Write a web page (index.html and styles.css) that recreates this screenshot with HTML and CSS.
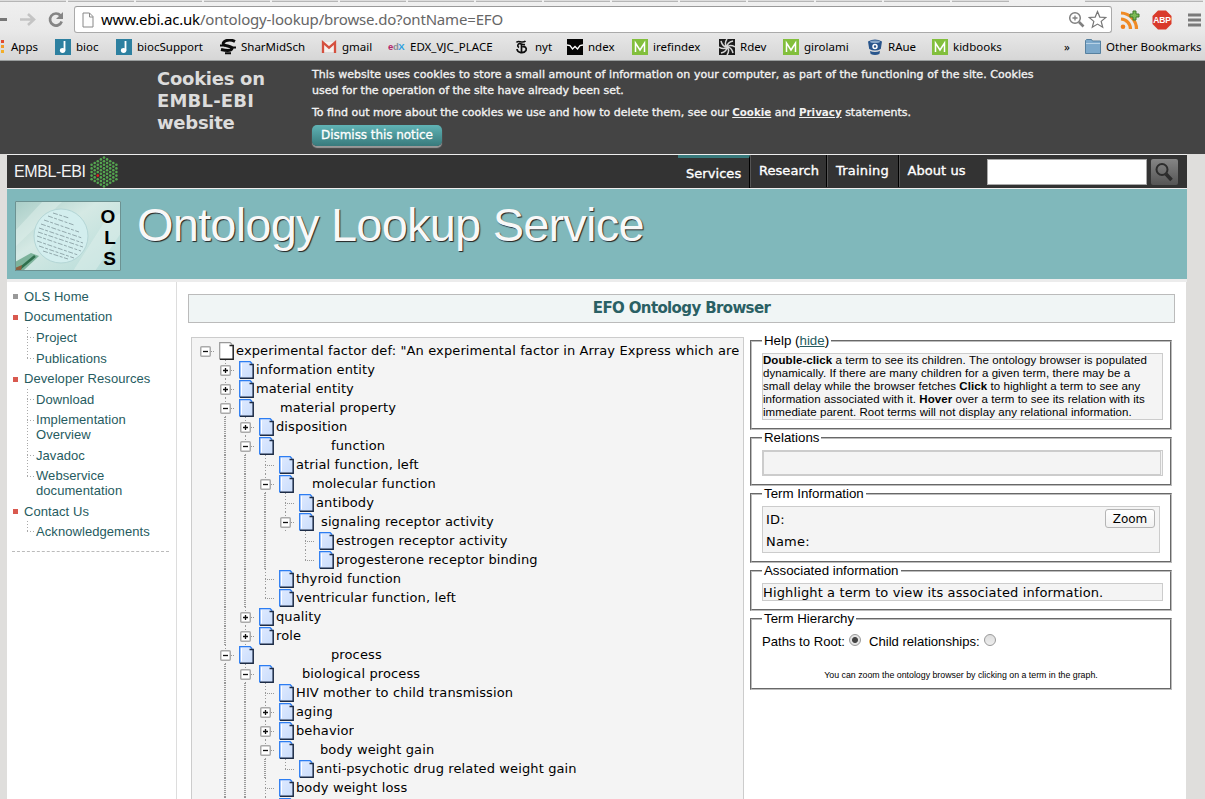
FILE: index.html
```html
<!DOCTYPE html>
<html lang="en">
<head>
<meta charset="utf-8">
<title>EFO Ontology Browser</title>
<link rel="stylesheet" href="styles.css">
</head>
<body>
<div class="chrome">
  <div class="tabs"><i></i><i></i><i></i><i></i><i></i><i></i><i></i><i></i><i></i><i></i><i></i><i></i><i></i><i></i><i class="short"></i><i class="active"></i><i class="rest"></i></div>
  <div class="toolbar">
    <svg class="navbtns" width="74" height="28" viewBox="0 0 74 28"><path d="M0 13.500h7" stroke="#777" stroke-width="3"/><path d="M20 13.500h13M28 8l6 5.500-6 5.500" stroke="#c4c4c4" stroke-width="2.600" fill="none"/><path d="M60.500 9.500a6 6 0 1 0 1.200 6" stroke="#858585" stroke-width="2.700" fill="none"/><path d="M63 6v7h-7z" fill="#858585"/></svg>
    <div class="omnibox">
      <svg width="12" height="16" viewBox="0 0 12 16"><path d="M1 1h6.500l3.500 3.500V15H1zM7.500 1v4H11" fill="#fdfdfd" stroke="#888"/></svg>
      <div class="url"><b>www.ebi.ac.uk</b>/ontology-lookup/browse.do?ontName=EFO</div>
      <svg class="mag" width="17" height="17" viewBox="0 0 17 17"><g fill="none" stroke="#808080"><circle cx="7" cy="7" r="5.300" stroke-width="1.500"/><path d="M7 4.500v5M4.500 7h5" stroke-width="1.300"/><path d="M11 11l4.500 4.500" stroke-width="2.600"/></g></svg>
      <svg class="star" width="19" height="19" viewBox="0 0 19 19"><path d="M9.500 1.500l2.300 5.600 6 .4-4.600 3.900 1.500 5.900-5.200-3.200-5.200 3.200 1.500-5.900L1.200 7.500l6-.4z" fill="#fff" stroke="#777" stroke-width="1.200"/></svg>
    </div>
    <svg class="rss" width="20" height="20" viewBox="0 0 20 20"><g fill="none" stroke="#f08a24" stroke-width="3.200"><path d="M1 3a16 16 0 0 1 15.500 16"/><path d="M1 9a10 10 0 0 1 9.500 10"/></g><circle cx="3" cy="16.800" r="2.300" fill="#ef7f1a"/><path d="M13 1h3v3h3v3h-3v3h-3V7h-3V4h3z" fill="#7dbb57" stroke="#3f7a2c"/></svg>
    <svg class="abp" width="20" height="20" viewBox="0 0 20 20"><path d="M6 .5h8L19.500 6v8L14 19.500H6L.5 14V6z" fill="#d93a2b"/><text x="10" y="13.300" text-anchor="middle" class="abptext">ABP</text></svg>
    <svg class="burger" width="14" height="14" viewBox="0 0 14 14"><path d="M0 2h13M0 7h13M0 12h13" stroke="#7a7a7a" stroke-width="3"/></svg>
  </div>
  <div class="bookmarks">
    <div class="bm apps"><svg width="4" height="16" viewBox="0 0 4 16"><path d="M1 1h3v3H1z" fill="#e2492f"/><path d="M1 6h3v3H1z" fill="#f09a28"/><path d="M1 11h3v3H1z" fill="#f3ae28"/></svg><span>Apps</span></div>
    <div class="bm"><svg width="16" height="16"><use href="#bioc"/></svg><span>bioc</span></div>
    <div class="bm"><svg width="16" height="16"><use href="#bioc"/></svg><span>biocSupport</span></div>
    <div class="bm"><svg width="16" height="16" viewBox="0 0 16 16"><path d="M15 2.500C8-1 2 3 3.500 5.300c1.500 2 9 1.700 8.500 4.200C11 12.500 5 11.500 1 10.500" fill="none" stroke="#0b0b0b" stroke-width="3"/><path d="M0 6.500h5M10 8.500h6M5 14.300h6" stroke="#0b0b0b" stroke-width="2"/></svg><span>SharMidSch</span></div>
    <div class="bm"><svg width="16" height="16" viewBox="0 0 16 16"><path d="M1.500 3h13v10h-13z" fill="#f4f0ee"/><path d="M2 14V3.500l6 5.200 6-5.200V14" fill="none" stroke="#d5503f" stroke-width="2.300"/></svg><span>gmail</span></div>
    <div class="bm"><svg width="17" height="16" viewBox="0 0 17 16"><text x="0" y="11" class="edx"><tspan fill="#b5256b">e</tspan><tspan fill="#8b8d96">d</tspan><tspan fill="#2ea1e0">X</tspan></text></svg><span>EDX_VJC_PLACE</span></div>
    <div class="bm"><svg width="16" height="16" viewBox="0 0 16 16"><g fill="none" stroke="#0c0c0c" stroke-width="1.700"><path d="M2.500 3.500c1-3 6 1.500 9-1.500M11 5.500C8 6 6 3.500 4.500 5s-.5 3 .5 3.500M3 10c.5 4 6.500 5 9 1.500C13 9 11 7 8.500 8M7.500 4.500V13"/></g></svg><span>nyt</span></div>
    <div class="bm"><svg width="16" height="16" viewBox="0 0 16 16"><path d="M0 0h16v16H0z" fill="#050505"/><path d="M0 6l3 .5 2.500 3.500L8 7.500l2.500 2.500L13 6.500l3-.5" fill="none" stroke="#fff" stroke-width="1.300"/></svg><span>ndex</span></div>
    <div class="bm"><svg width="16" height="16"><use href="#mm"/></svg><span>irefindex</span></div>
    <div class="bm"><svg width="16" height="16" viewBox="0 0 16 16"><path d="M0 0h16v16H0z" fill="#1c1c1c"/><g fill="none" stroke="#d8d8d8" stroke-width="1.500"><path d="M8 8C6 6 6 3 8 0M8 8c0-3 2-5 6-6M8 8c2-2 5-2 8 0M8 8c3 0 5 2 6 6M8 8c2 2 2 5 0 8M8 8c0 3-2 5-6 6M8 8c-2 2-5 2-8 0M8 8C5 8 3 6 2 2"/></g></svg><span>Rdev</span></div>
    <div class="bm"><svg width="16" height="16"><use href="#mm"/></svg><span>girolami</span></div>
    <div class="bm"><svg width="16" height="16" viewBox="0 0 16 16"><path d="M1 2.500Q8-1.500 15 2.500L13.800 10Q8 13 2.200 10zM3 12q5 2 10 0l-.6 3Q8 17 3.600 15z" fill="#28558c"/><ellipse cx="8" cy="2.800" rx="5" ry="1.200" fill="#86a6c8"/><circle cx="8" cy="7.500" r="2" fill="none" stroke="#fff" stroke-width="1.500"/></svg><span>RAue</span></div>
    <div class="bm"><svg width="16" height="16"><use href="#mm"/></svg><span>kidbooks</span></div>
    <div class="bm more">»</div>
    <div class="bm"><svg width="16" height="16" viewBox="0 0 16 16"><path d="M.5 14.500V1.500l1-1h5l1 1.500h8v12.500z" fill="#7da9cb" stroke="#56809f"/><path d="M1 4.500h14" stroke="#b7d2e6"/></svg><span>Other Bookmarks</span></div>
  </div>
</div>
<svg class="defs" width="0" height="0">
  <defs>
    <linearGradient id="blue" x1="0" y1="0" x2="1" y2="1"><stop offset="0" stop-color="#dfeaff"/><stop offset="1" stop-color="#c9dcfb"/></linearGradient>
  </defs>
  <symbol id="bioc" viewBox="0 0 16 16"><path d="M0 0h16v16H0z" fill="#2d80a0"/><path d="M9.500 2v9.500" stroke="#fff" stroke-width="1.800"/><ellipse cx="7.600" cy="11.500" rx="2.700" ry="2.400" fill="#fff"/></symbol>
  <symbol id="mm" viewBox="0 0 16 16"><path d="M0 0h16v16H0z" fill="#82bf3c"/><path d="M3.500 13V4l4.500 7 4.500-7v9" fill="none" stroke="#fff" stroke-width="1.500"/></symbol>
  <symbol id="page" viewBox="0 0 16 18"><path d="M1 .8h9.700L14.500 5v12H1z" fill="url(#blue)"/><path d="M2.500 2.300v13" stroke="#fff"/><path d="M.7 17.500V.7h10.500l2 2" fill="none" stroke="#2c7df2" stroke-width="1.300"/><path d="M10.500 3.500h3.700v13.700H1" fill="none" stroke="#1c2b45" stroke-width="1.500"/></symbol>
  <symbol id="root" viewBox="0 0 16 18"><path d="M1 .8h9.700L14.500 5v12H1z" fill="#fff"/><path d="M.7 17.500V.7h10.500l2 2" fill="none" stroke="#999" stroke-width="1.200"/><path d="M10.500 3.500h3.700v13.700H1" fill="none" stroke="#222" stroke-width="1.500"/></symbol>
</svg>
<div class="cookie">
  <h2>Cookies on<br><span class="wide">EMBL-EBI</span><br>website</h2>
  <div class="cookietext">
    <p><span class="l1">This website uses cookies to store a small amount of information on your computer, as part of the functioning of the site. Cookies</span><br><span>used for the operation of the site have already been set.</span></p>
    <p>To find out more about the cookies we use and how to delete them, see our <a>Cookie</a> and <a>Privacy</a> statements.</p>
    <button class="dismiss">Dismiss this notice</button>
  </div>
</div>
<div class="page">
  <div class="masthead">
    <div class="embl">EMBL-EBI</div>
    <svg class="hex" id="hex" width="28" height="32" viewBox="0 0 28 32"></svg>
    <div class="nav"><a class="on">Services</a><a>Research</a><a>Training</a><a>About us</a></div>
    <div class="search"></div>
    <div class="go"><svg width="26" height="26" viewBox="0 0 26 26"><circle cx="11" cy="10.500" r="5.500" fill="none" stroke="#2c2c2c" stroke-width="2"/><path d="M15 15l5.500 6" stroke="#2c2c2c" stroke-width="3.600"/></svg></div>
  </div>
  <div class="banner">
    <svg width="106" height="70" viewBox="0 0 106 70">
      <defs><linearGradient id="bg" x1="0" y1="0" x2="1" y2="1"><stop offset="0" stop-color="#a9cdc7"/><stop offset=".4" stop-color="#d5e9e4"/><stop offset="1" stop-color="#b3dbd8"/></linearGradient></defs>
      <path d="M0 0h106v70H0z" fill="url(#bg)"/>
      <path d="M0 30L28 0h20L0 46zM58 70L90 20l16-8v20L80 70z" fill="#e0f0eb" opacity=".5"/>
      <path d="M0 61l16-9 8 3L8 70H0z" fill="#7db39b"/><path d="M2 70l18-15" stroke="#2f6f4c" stroke-width="2.500"/><path d="M0 67l7-3-1 6H0z" fill="#8c6040"/>
      <circle cx="46" cy="35" r="27" fill="#d3eeee" stroke="#b4d6d6"/>
      <g stroke="#7d9297" stroke-dasharray="5 1.500 3 1.500" opacity=".75"><path d="M33 15l26 9M29 19l35 12M26 23l41 14M24 27l44 15M23 31l45 15M22 35l44 15M22 40l41 14M24 45l35 12M28 50l25 8M38 12l16 5"/></g>
      <path d="M.5.5h105v69H.5z" fill="none" stroke="#6c9292"/>
      <g class="olstext"><text x="93" y="22">O</text><text x="95" y="43">L</text><text x="94.500" y="64">S</text></g>
    </svg>
    <h1>Ontology Lookup Service</h1>
  </div>
  <div class="body">
    <div class="side">
      <ul>
        <li class="top grey">OLS Home</li>
        <li class="top h21">Documentation</li>
        <li class="sub">Project</li>
        <li class="sub last h20">Publications</li>
        <li class="top h21">Developer Resources</li>
        <li class="sub">Download</li>
        <li class="sub two">Implementation<br>Overview</li>
        <li class="sub">Javadoc</li>
        <li class="sub two last">Webservice<br>documentation</li>
        <li class="top">Contact Us</li>
        <li class="sub last">Acknowledgements</li>
      </ul>
    </div>
    <div class="main">
      <div class="title">EFO Ontology Browser</div>
      <div class="cols">
        <div class="tree" id="tree"></div>
        <div class="right">
          <fieldset class="f1"><legend>Help (<a>hide</a>)</legend>
            <div class="box help"><b>Double-click</b> a term to see its children. The ontology browser is populated<br>dynamically. If there are many children for a given term, there may be a<br>small delay while the browser fetches <b>Click</b> to highlight a term to see any<br>information associated with it. <b>Hover</b> over a term to see its relation with its<br>immediate parent. Root terms will not display any relational information.</div></fieldset>
          <fieldset class="f2"><legend>Relations</legend><div class="box rel"><div></div></div></fieldset>
          <fieldset class="f3"><legend>Term Information</legend><div class="box term"><div class="labels">ID:<br>Name:</div><button>Zoom</button></div></fieldset>
          <fieldset class="f4"><legend>Associated information</legend><div class="box assoc">Highlight a term to view its associated information.</div></fieldset>
          <fieldset class="f5"><legend>Term Hierarchy</legend>
            <div class="radios"><span>Paths to Root:</span><i class="radio sel"></i><span class="child">Child relationships:</span><i class="radio"></i></div>
            <div class="note">You can zoom the ontology browser by clicking on a term in the graph.</div></fieldset>
        </div>
      </div>
    </div>
  </div>
</div>
<script src="app.js"></script>
</body>
</html>
```
FILE: styles.css
```css
* { box-sizing: border-box; }
body { margin: 0; width: 1205px; height: 799px; overflow: hidden; background: #dfdedc; font-family: "Liberation Sans", Arial, sans-serif; color: #000; }
svg { display: block; flex: none; }
.defs { position: absolute; }
.chrome { height: 61px; overflow: hidden; background: linear-gradient(#f0f0f0, #e9e9e9 50%, #d6d6d6); border-bottom: 1px solid #9a9e9e; }
.tabs { height: 2px; display: flex; gap: 2px; overflow: hidden; }
.tabs i { flex: none; width: 66px; height: 2px; background: #ddd; border-bottom: 1px solid #b5b5b5; }
.tabs .short { width: 57px; }
.tabs .active { width: 72px; border: 0; background: none; }
.tabs .rest { width: 118px; }
.toolbar { display: flex; height: 31px; padding-top: 4px; }
.omnibox { width: 1038px; height: 27px; background: #fff; border: 1px solid #aaa; border-top-color: #999; border-radius: 3px; display: flex; align-items: center; padding-left: 7px; }
.url { width: 967px; margin: -2px 0 0 7px; font: 15px "Noto Sans", sans-serif; color: #666; white-space: nowrap; letter-spacing: -.18px; }
.url b { font-weight: 400; color: #000; }
.star { margin-left: 3px; }
.rss { margin: 4px 0 0 8px; }
.abp { margin: 4px 0 0 12px; }
.abptext { font: bold 8.5px "Liberation Sans", sans-serif; fill: #fff; letter-spacing: -.2px; }
.burger { margin: 7px 0 0 16px; }
.bookmarks { display: grid; height: 27px; align-items: center; grid-template-columns: 55px 61px 104px 101px 67px 126px 53px 65px 87px 64px 84px 65px 132px 21px 120px; }
.bm { display: flex; align-items: center; font: 11.5px "Noto Sans", sans-serif; gap: 5px; white-space: nowrap; letter-spacing: 0; }
.bm span { margin-top: -1px; }
.apps { gap: 7px; }
.edx { font: bold 9.5px "Liberation Sans", sans-serif; letter-spacing: -.4px; }
.cookie { height: 93px; background: #444; display: flex; color: #f2f2f2; font-family: "DejaVu Sans", sans-serif; }
.cookie h2 { margin: 7px 0 0 157px; width: 155px; font-size: 18px; line-height: 22px; color: #dcdcdc; letter-spacing: -.27px; }
.wide { letter-spacing: .2px; }
.cookietext { font-size: 11px; -webkit-text-stroke: .35px #f2f2f2; white-space: nowrap; }
.cookietext p { margin: 0; line-height: 16px; }
.cookietext p:first-child { margin-top: 6px; }
.cookietext p + p { margin-top: 5px; }
.l1 { letter-spacing: .045px; }
.cookie a { text-decoration: underline; font-weight: 700; -webkit-text-stroke: 0; font-size: 10.3px; }
.dismiss { display: block; width: 130px; height: 21px; margin-top: 4px; padding: 0 0 2px; border: 0; border-radius: 5px; color: #fff; font: 12px "DejaVu Sans", sans-serif; letter-spacing: -.05px; -webkit-text-stroke: .3px #fff; background: linear-gradient(#60b3b5, #387a7c); box-shadow: 0 2px 1px #999; }
.page { width: 1180px; margin: 0 0 0 7px; border-top: 1px solid #eee; }
.masthead { display: flex; height: 34px; background: #333; border-bottom: 1px solid #eee; }
.embl { margin-left: 7px; width: 76px; line-height: 34px; font-size: 16px; letter-spacing: -.4px; color: #f2f2f2; }
.hex { width: 28px; margin-top: 1px; }
.nav { display: flex; margin-left: 560px; width: 309px; font: 13px "DejaVu Sans", sans-serif; color: #fff; -webkit-text-stroke: .35px #fff; height: 32px; }
.nav a { padding: 0 8px; line-height: 31px; border-right: 1px solid #000; border-left: 1px solid #555; white-space: nowrap; width: 77px; letter-spacing: .05px; }
.nav a:nth-child(3) { width: 72px; letter-spacing: .2px; }
.nav a:last-child { border-right: 0; width: 89px; }
.nav .on { width: 72px; border-left: 0; border-top: 3px solid #387a7c; line-height: 31px; height: 33px; }
.search { width: 160px; height: 26px; margin-top: 4px; background: #fff; border: 1px solid #aaa; }
.go { width: 27px; height: 26px; margin: 4px 0 0 4px; border-radius: 2px; background: linear-gradient(#858585, #555); }
.banner { height: 93px; background: #80b8bb; border-bottom: 3px solid #ececec; display: flex; padding: 12px 0 0 8px; }
.banner h1 { margin: -4px 0 0 16px; font-size: 47px; line-height: 56px; font-weight: 400; color: #f8f8f8; text-shadow: 1px 1px 1px #222; letter-spacing: -.8px; }
.olstext { font: bold 19px "Liberation Sans", sans-serif; text-anchor: middle; }
.body { display: flex; height: 517px; width: 1179px; background: #fff; }
.side { width: 170px; border-right: 1px solid #ddd; padding: 4px 0 0 5px; }
.side ul { list-style: none; margin: 0; padding: 0 0 9px; width: 157px; border-bottom: 1px dashed #bbb; color: #265b60; font-size: 13px; line-height: 15px; letter-spacing: .07px; }
.side li { height: 20px; white-space: nowrap; }
.top { display: flex; align-items: center; gap: 6px; }
.side .h21 { height: 21px; }
.top::before { content: ""; width: 5px; height: 5px; background: #d9594f; margin: 1px 0 0 1px; }
.top.grey::before { background: #999; }
.side .sub { height: 21px; padding: 3px 0 0 24px; background: repeating-linear-gradient(#aaa 0 1px, transparent 1px 3px) 15px 0 / 1px 100% no-repeat, repeating-linear-gradient(90deg, #aaa 0 1px, transparent 1px 3px) 15px 10px / 8px 1px no-repeat; }
.side .last { background-size: 1px 11px, 8px 1px; }
.side .h20 { height: 20px; }
.side .two { height: 35px; padding-top: 2px; }
.main { padding: 12px 0 0 11px; width: 1009px; }
.title { width: 987px; height: 29px; border: 1px solid #bbb; background: #f0f5f5; text-align: center; font: bold 15px/26px "DejaVu Sans", sans-serif; color: #2a6064; letter-spacing: -.63px; }
.cols { display: flex; margin: 10px 0 0 3px; }
.tree { width: 553px; height: 470px; margin-top: 4px; padding: 3px 4px 0 3px; border: 1px solid #ccc; background: #f4f4f4; font: 13px/19px "DejaVu Sans", sans-serif; overflow: hidden; }
.row { display: flex; height: 19px; overflow: hidden; white-space: pre; letter-spacing: .12px; }
.row > svg { margin-left: 4px; margin-top: 1px; }
.cell { flex: none; width: 20px; height: 19px; padding-top: 5px; }
.line { background: repeating-linear-gradient(#999 0 1px, transparent 1px 2px) 9px 0 / 2px 100% no-repeat; }
.tee, .ell, .tog { background: repeating-linear-gradient(#999 0 1px, transparent 1px 3px) 10px 0 / 1px 100% no-repeat, repeating-linear-gradient(90deg, #999 0 1px, transparent 1px 2px) 10px 10px / 10px 1px no-repeat; }
.ell { background-size: 1px 11px, 10px 1px; }
.tog.first { background-size: 0 0, 10px 1px; }
.tog svg { margin-left: 5px; }
.label { margin-left: 1px; line-height: 20px; height: 19px; overflow: hidden; }
.right { margin-left: 6px; width: 422px; }
fieldset { margin: 0; padding: 0 7px 0 10px; border: 2px groove #bcbcbc; min-width: 0; font-size: 13.1px; }
legend { height: 16px; line-height: 16px; padding: 0 2px; font-size: 13.3px; }
.right a { color: #265b60; text-decoration: underline; }
.f1 { height: 97px; } .f2 { height: 56px; } .f3 { height: 77px; } .f4 { height: 48px; } .f5 { height: 79px; }
.box { width: 401px; background: #f4f4f4; border: 1px solid #ccc; white-space: nowrap; overflow: hidden; }
.help { margin-top: 4px; height: 67px; font-size: 11.5px; letter-spacing: .07px; line-height: 13px; }
.rel { margin-top: 4px; height: 26px; }
.rel div { width: 398px; height: 24px; border: 1px solid #ccc; }
.term { margin-top: 4px; width: 398px; height: 47px; padding: 2px 4px 0 3px; display: flex; justify-content: space-between; font: 13px/22px "DejaVu Sans", sans-serif; letter-spacing: .2px; }
.term button { width: 50px; height: 19px; margin-top: 0; padding: 1px 0 0; border: 1px solid #b5b5b5; border-radius: 3px; background: linear-gradient(#fff, #f1f1f1); font: 12px "DejaVu Sans", sans-serif; }
.assoc { margin-top: 4px; height: 18px; font: 13px/17px "DejaVu Sans", sans-serif; letter-spacing: .13px; }
.radios { display: flex; align-items: center; height: 18px; margin-top: 5px; }
.child { margin-left: 8px; }
.radio { width: 12px; height: 12px; margin: -2px 0 0 4px; border-radius: 50%; border: 1px solid #999; background: linear-gradient(#ddd, #eee); }
.sel { background: radial-gradient(circle, #444 0 2.500px, #e4e4e4 3.500px); }
.note { margin: 18px 0 0; padding-right: 3px; text-align: center; font-size: 8.800px; line-height: 14px; }
```
FILE: app.js
```js
const SVG = 'http://www.w3.org/2000/svg';

// Rows: guide cells (| line, blank), node kind (+ - t l), label, label indent
const rows = [
  ['', '-', 'experimental factor def: "An experimental factor in Array Express which are', 0],
  ['', '+', 'information entity', 0],
  ['', '+', 'material entity', 0],
  ['', '-', 'material property', 24],
  ['|', '+', 'disposition', 0],
  ['|', '-', 'function', 55],
  ['||', 't', 'atrial function, left', 0],
  ['||', '-', 'molecular function', 16],
  ['|||', 't', 'antibody', 0],
  ['|||', '-', 'signaling receptor activity', 5],
  ['||| ', 't', 'estrogen receptor activity', 0],
  ['||| ', 'l', 'progesterone receptor binding', 0],
  ['||', 't', 'thyroid function', 0],
  ['||', 'l', 'ventricular function, left', 0],
  ['|', '+', 'quality', 0],
  ['|', '+', 'role', 0],
  ['', '-', 'process', 75],
  ['|', '-', 'biological process', 26],
  ['||', 't', 'HIV mother to child transmission', 0],
  ['||', '+', 'aging', 0],
  ['||', '+', 'behavior', 0],
  ['||', '-', 'body weight gain', 24],
  ['|||', 'l', 'anti-psychotic drug related weight gain', 0],
  ['||', 't', 'body weight loss', 0],
  ['||', 't', '', 0]
];

const toggle = plus => `<svg width="11" height="11" viewBox="0 0 11 11"><rect x=".75" y=".75" width="9.500" height="9.500" rx="1" fill="#fff" stroke="#aaa" stroke-width="1.500"/><path d="M3 5.500h5${plus ? 'M5.500 3v5' : ''}" stroke="#111" stroke-width="1.300"/></svg>`;

document.getElementById('tree').innerHTML = rows.map(([guides, kind, text, indent], i) => {
  const lead = i ? '<div class="cell"></div>' : '';
  const lines = [...guides].map(g => `<div class="cell ${g === '|' ? 'line' : ''}"></div>`).join('');
  const node = kind === 't' ? '<div class="cell tee"></div>'
    : kind === 'l' ? '<div class="cell ell"></div>'
    : `<div class="cell tog ${i ? '' : 'first'}">${toggle(kind === '+')}</div>`;
  return `<div class="row">${lead}${lines}${node}<svg width="16" height="18"><use href="#${i ? 'page' : 'root'}"/></svg><div class="label" style="padding-left:${indent}px">${text}</div></div>`;
}).join('');

// Hexagonal dot field of the logo
const hex = document.getElementById('hex');
for (let c = 0; c < 9; c++) {
  const n = 9 - Math.abs(c - 4);
  for (let r = 0; r < n; r++) {
    const dot = document.createElementNS(SVG, 'circle');
    dot.setAttribute('cx', 1.6 + c * 3.1);
    dot.setAttribute('cy', 16 + (r - (n - 1) / 2) * 3.6);
    dot.setAttribute('r', 1.3);
    dot.setAttribute('fill', c === 2 && r === 4 ? '#e32219' : '#55a650');
    hex.appendChild(dot);
  }
}
```
